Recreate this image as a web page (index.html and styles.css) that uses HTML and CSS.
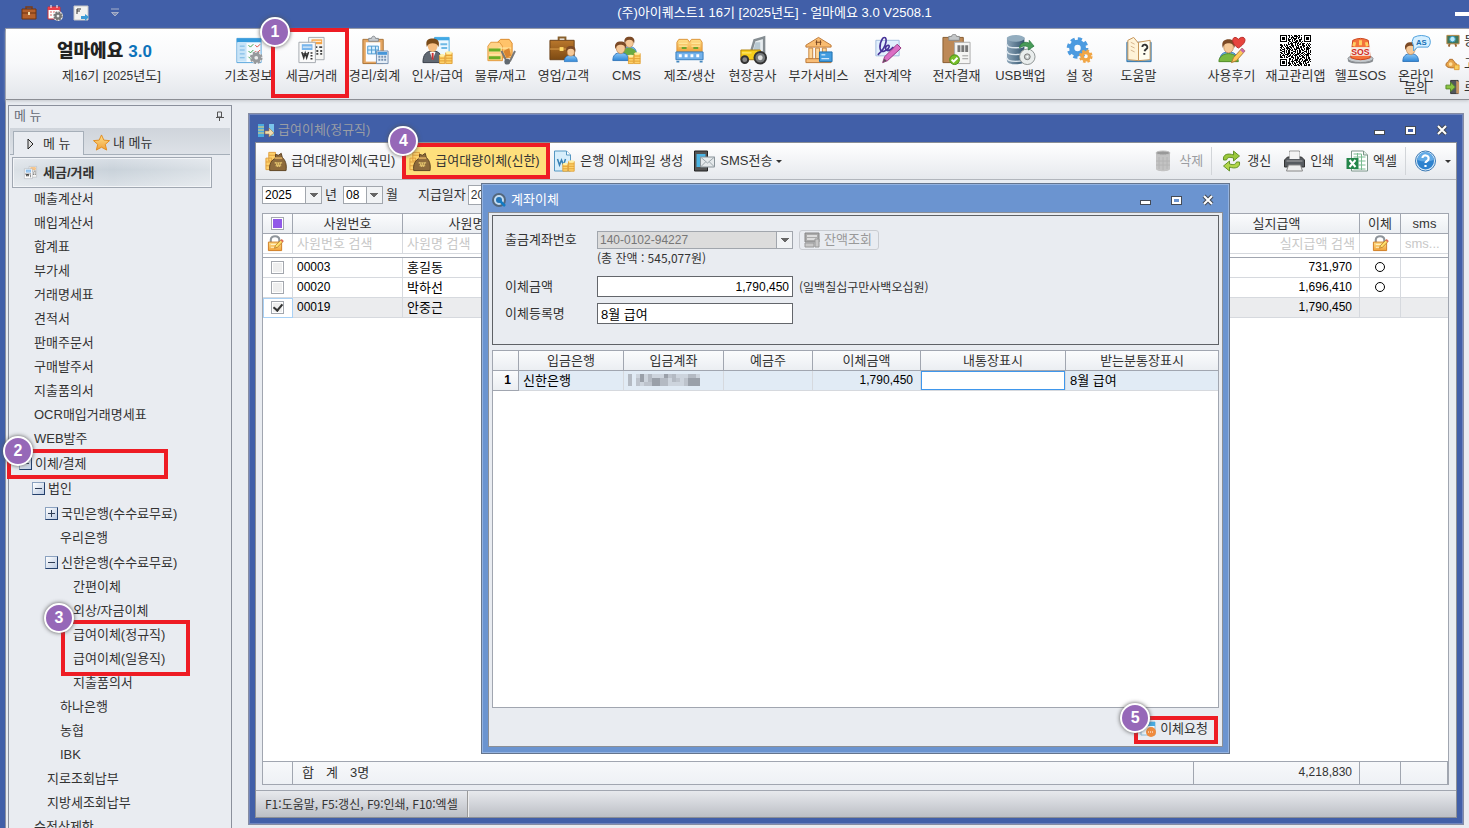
FILE: index.html
```html
<!DOCTYPE html>
<html lang="ko">
<head>
    <meta charset="UTF-8">
    <meta name="viewport" content="width=device-width, initial-scale=1.0">
    <title>(주)아이퀘스트1 16기 [2025년도] - 얼마에요 3.0 V2508.1</title>
    <link rel="stylesheet" href="styles.css">
</head>
<body>
    <!-- shared icon shapes -->
    <svg class="defs" aria-hidden="true">
        <defs>
            <linearGradient id="gBlue" x1="0" y1="0" x2="0" y2="1"><stop offset="0" stop-color="#8cc9f8"/><stop offset="1" stop-color="#2f86d6"/></linearGradient>
            <linearGradient id="gGold" x1="0" y1="0" x2="0" y2="1"><stop offset="0" stop-color="#ffe08a"/><stop offset="1" stop-color="#f0a13a"/></linearGradient>
            <linearGradient id="gBrown" x1="0" y1="0" x2="0" y2="1"><stop offset="0" stop-color="#b9772c"/><stop offset="1" stop-color="#7d4a12"/></linearGradient>
            <linearGradient id="gSteel" x1="0" y1="0" x2="1" y2="0"><stop offset="0" stop-color="#8ba4b8"/><stop offset="1" stop-color="#34556e"/></linearGradient>
        </defs>
        <symbol id="person" viewBox="0 0 20 24">
            <path d="M1 23c0-6 3-9 9-9s9 3 9 9z" fill="url(#gBlue)" stroke="#2d72b8"/>
            <ellipse cx="10" cy="9" rx="5" ry="6" fill="#f6c998" stroke="#b8793e" stroke-width=".7"/>
            <path d="M4 10C2 3 6 1 10 1s8 2 6 9c-1-4-3-5-6-5s-5 1-6 5z" fill="#7c4a26"/>
        </symbol>
        <symbol id="coins" viewBox="0 0 16 16">
            <path d="M1 6h6v9H1zM8 3h7v12H8z" fill="#fdd16b" stroke="#e09c2c"/>
            <path d="M1 9h6M1 12h6M8 6h7M8 9h7M8 12h7" stroke="#e09c2c"/>
            <ellipse cx="4" cy="6" rx="3" ry="1.5" fill="#fff0a8"/><ellipse cx="11.500" cy="3" rx="3.500" ry="1.500" fill="#fff0a8"/>
        </symbol>
        <symbol id="gear" viewBox="0 0 20 20">
            <circle cx="10" cy="10" r="7.800" fill="none" stroke="currentColor" stroke-width="3" stroke-dasharray="3.500 2.627"/>
            <circle cx="10" cy="10" r="5" fill="none" stroke="currentColor" stroke-width="4.500"/>
        </symbol>
        <symbol id="bag" viewBox="0 0 24 22">
            <path d="M2 8h6v12H2zM5 2h7v9H5z" fill="#fdd16b" stroke="#e0a040"/>
            <path d="M2 12h6M2 16h6M5 5h7" stroke="#e0a040"/>
            <path d="M12 4l3 1 3-2 1 4c3 3 5 7 4 14H6c-1-7 2-11 6-13z" fill="#8d6a3c" stroke="#5d4220"/>
            <path d="M11 8h8" stroke="#d2a55b" stroke-width="2"/>
            <path d="M11 13h8M12 16h6M12 12l2 5 1-4 1 4 2-5" stroke="#e6c66f" fill="none"/>
        </symbol>
        <symbol id="tax" viewBox="0 0 32 32">
            <path d="M13 3h16v23H13z" fill="#f6f6f4" stroke="#a4a9af"/>
            <path d="M16 5h11v5H16z" fill="#f5a548"/><path d="M17 7h9" stroke="#fff"/>
            <path d="M16 13h2m2 0h2m2 0h3M21 17h2m2 0h2M21 20h2m2 0h2" stroke="#444" stroke-width="2"/>
            <path d="M3 8h17v21H3z" fill="#fafafa" stroke="#a4a9af"/>
            <path d="M6 10h11v6H6z" fill="#79b5ec"/><path d="M7 13h9" stroke="#fff"/>
            <path d="M6 20h7M6 18l2 6 1.500-5 1.500 5 2-6M15 19h2m-2 3h2m-2 3h2" stroke="#333" stroke-width="1.500" fill="none"/>
        </symbol>
        <symbol id="lock" viewBox="0 0 18 18">
            <path d="M4 8V5c0-5 9-5 9 0v3" fill="none" stroke="#8f959b" stroke-width="2.200"/>
            <path d="M1.500 7.500h14v9h-14z" fill="url(#gGold)" stroke="#cf7c21"/>
            <path d="M4 10h6M4 13h4" stroke="#fff5cf"/>
            <path d="M8 14l1-3 6-6 2 2-6 6z" fill="#ffe06b" stroke="#b57422" stroke-width=".8"/><path d="M15 5l2 2" stroke="#df6b58" stroke-width="2"/>
        </symbol>
    </svg>

    <header class="titlebar">
        <div class="quick">
            <button type="button" aria-label="업무"><svg viewBox="0 0 16 16"><path d="M5 4V2h6v2" fill="none" stroke="#7c3d16" stroke-width="1.500"/><path d="M1 4h14v10H1z" fill="#b4602c" stroke="#71340f"/><path d="M1 8h14" stroke="#6c3210"/><path d="M7 7h2v3H7z" fill="#f2dba7"/></svg></button>
            <button type="button" aria-label="일정"><svg viewBox="0 0 16 16"><path d="M1 2h12v12H1z" fill="#fff" stroke="#c33"/><path d="M1 2h12v3H1z" fill="#e8404c"/><path d="M4 0v3M10 0v3" stroke="#fff"/><path d="M3 7h2m1 0h2M3 10h2" stroke="#d66"/><circle cx="11" cy="11" r="5" fill="#eee"/><svg x="6" y="6" width="10" height="10" color="#777"><use href="#gear"/></svg></svg></button>
            <button type="button" aria-label="기능키"><svg viewBox="0 0 16 16"><path d="M1 1h14v14H1z" fill="#f3f3f1" stroke="#c6c6c6"/><path d="M4 9V4h4M4 6h3" stroke="#333" fill="none"/><path d="M8 11h4V9l4 3-4 4v-2H8z" fill="#3d9bd6"/></svg></button>
            <button type="button" class="quick-more" aria-label="더 보기"><svg viewBox="0 0 16 16"><path d="M4 4h8M4.500 7.500h7L8 11z" stroke="#a6b0c9" fill="#7f8db5"/></svg></button>
        </div>
        <h1>(주)아이퀘스트1 16기 [2025년도] - 얼마에요 3.0 V2508.1</h1>
        <button type="button" class="app-min" aria-label="최소화"></button>
    </header>

    <div class="shell">
        <div class="ribbon">
            <div class="brand">
                <div class="logo">얼마에요 <span>3.0</span></div>
                <div class="period">제<span class="num">16</span>기 [<span class="num">2025</span>년도]</div>
            </div>
            <nav class="ribbon-menu" aria-label="주 메뉴">
                <button type="button"><svg viewBox="0 0 32 32"><path d="M4 4h25v25H4z" fill="#f8fbfe" stroke="#5aa5dc"/><path d="M4 4h25v4H4z" fill="#359bdc"/><path d="M5 8h9v20H5z" fill="#c7e4f8"/><path d="M7 12h5M7 16h5M7 20h5M7 24h5" stroke="#73b5e4"/><path d="M16 11l2 2 3-3M16 17l2 2 3-3M16 23l2 2 3-3" fill="none" stroke="#38a04c"/><path d="M23 11l2 2 3-3M23 17l2 2 3-3" fill="none" stroke="#df4b43"/><circle cx="24" cy="24" r="6" fill="#eee"/><svg x="17" y="17" width="14" height="14" color="#96999c"><use href="#gear"/></svg></svg>기초정보</button>
                <button type="button" class="marked mark-tax"><svg><use href="#tax"/></svg>세금/거래<b class="badge">1</b></button>
                <button type="button"><svg viewBox="0 0 32 32"><path d="M4 5h21v25H4z" fill="#e5a662" stroke="#a97336"/><path d="M7 8h15v20H7z" fill="#fafcff"/><path d="M10 6V4h3c0-3 4-3 4 0h3v3H10z" fill="#c8ccd0" stroke="#83888e"/><path d="M9 12h11v8H9zM9 16h11M13 12v8M17 12v8" fill="#d8efff" stroke="#4d9bd2"/><path d="M18 17h12v13H18z" fill="#e5eef7" stroke="#7892b2"/><path d="M19 18h10v3H19z" fill="#4696d9"/><path d="M20 23h2m1 0h2m1 0h2M20 26h2m1 0h2m1 0h2" stroke="#7792b2" stroke-width="2"/></svg>경리/회계</button>
                <button type="button"><svg viewBox="0 0 32 32"><path d="M13 3h15v19H13z" fill="#edf8ff" stroke="#4eaee4"/><path d="M13 3h15v3H13z" fill="#42a9e5"/><path d="M19 10h7M20 14h6" stroke="#6fb9e5" stroke-width="2"/><path d="M1 29c0-8 3-12 10-12s10 4 10 12z" fill="#606872" stroke="#343b45"/><path d="M8 18l3 8 3-8z" fill="#fff"/><path d="M11 19v7" stroke="#c33" stroke-width="2"/><ellipse cx="11" cy="12" rx="5" ry="6" fill="#f5bd80"/><path d="M5 13C3 5 7 4 11 4s8 2 6 9c-1-3-3-4-6-4s-5 1-6 4z" fill="#7a4b19"/><svg x="17" y="16" width="15" height="15"><use href="#coins"/></svg></svg>인사/급여</button>
                <button type="button"><svg viewBox="0 0 32 32"><path d="M13 8l3-3h9l3 4v15H13z" fill="#ffc36a" stroke="#db8a2c"/><path d="M3 12l3-4h9l3 4v15H3z" fill="#ffd287" stroke="#e39a3e"/><path d="M4 17h12M4 21h12M14 14h13" stroke="#fff0b0"/><path d="M4 16h12M4 24h12" stroke="#69ad25" stroke-width="3"/><path d="M17 17l5 10h4l5-10" fill="none" stroke="#777" stroke-width="2"/><path d="M19 17l6-3 2 8-5 2z" fill="#d88531"/><circle cx="23" cy="28" r="3" fill="#626970"/></svg>물류/재고</button>
                <button type="button"><svg viewBox="0 0 32 32"><path d="M11 6V3h7v3" fill="none" stroke="#88602d" stroke-width="2"/><path d="M2 6h25v20H2z" fill="url(#gBrown)" stroke="#6a4016"/><path d="M2 15h25" stroke="#dfa14d"/><path d="M12 13h4v4h-4z" fill="#ffdb68"/><svg x="16" y="11" width="15" height="18"><use href="#person"/></svg></svg>영업/고객</button>
                <button type="button"><svg viewBox="0 0 32 32"><svg x="11" y="1" width="16" height="20"><use href="#person"/></svg><path d="M11 21c0-10 16-10 16 1z" fill="#69aa42"/><svg x="1" y="5" width="18" height="24"><use href="#person"/></svg><svg x="17" y="17" width="14" height="14"><use href="#coins"/></svg></svg>CMS</button>
                <button type="button"><svg viewBox="0 0 32 32"><path d="M3 8l2-3h9l2 3 2-3h9l2 3v10H3z" fill="url(#gGold)" stroke="#dc9439"/><path d="M5 9h9M18 9h9M5 12h9M18 12h9" stroke="#fff2a8"/><path d="M8 14h5M20 14h5" stroke="#6ca42d" stroke-width="2"/><path d="M2 18h28v8H2z" fill="#73b1ea" stroke="#367fc0"/><path d="M5 22h3m3 0h3m3 0h3m3 0h3" stroke="#fff" stroke-width="3"/><path d="M4 27v2m24-2v2" stroke="#4386bd" stroke-width="3"/></svg>제조/생산</button>
                <button type="button"><svg viewBox="0 0 32 32"><path d="M15 16l3-10 10-3v16" fill="#e8edf0" stroke="#858d92" stroke-width="2.500"/><path d="M19 8h5v8h-7z" fill="#b9c9d2"/><path d="M4 16h20v10H4z" fill="#f7ce19" stroke="#b28209"/><path d="M5 19h10" stroke="#fff18a"/><circle cx="24" cy="24" r="6" fill="#777b7d" stroke="#333" stroke-width="2"/><circle cx="24" cy="24" r="2.500" fill="#e1e1df"/><circle cx="8" cy="26" r="3.500" fill="#888" stroke="#333" stroke-width="2"/></svg>현장공사</button>
                <button type="button" class="wide"><svg viewBox="0 0 32 32"><path d="M3 11L16 3l13 8v2H3z" fill="#f9bc70" stroke="#bd7937"/><path d="M6 14h4v11H6zM13 14h4v11h-4zM20 14h4v11h-4z" fill="#ffd798" stroke="#c78440"/><path d="M3 25h26v4H3z" fill="#f8bd77" stroke="#bd7937"/><path d="M14 6v5m4-5v5m-5-3h6" stroke="#774522"/><path d="M17 18h13v10H17z" fill="#449de0" stroke="#1e6fad"/><path d="M19 21h4M19 25h8" stroke="#fff"/></svg>부가서비스</button>
                <button type="button" class="wide"><svg viewBox="0 0 32 32"><path d="M4 6h24v16H4z" fill="#e1effd" stroke="#a2bcdd"/><path d="M6 21C17 11 16 0 11 4 7 10 7 20 13 17c7-3 5-8 2-5s1 8 7 1c-2 8 3 4 5-1" fill="none" stroke="#463298" stroke-width="1.700"/><path d="M11 29l2-6L26 10l4 4-14 13z" fill="#db6fc5" stroke="#953880"/><path d="M11 29l4-2-2-2z" fill="#555"/></svg>전자계약</button>
                <button type="button" class="wide"><svg viewBox="0 0 32 32"><path d="M2 3h21v26H2z" fill="#bd8957" stroke="#875c31"/><path d="M8 5V2h3c0-3 5-3 5 0h3v4H8z" fill="#c3c6c8" stroke="#888"/><path d="M14 8h16v22H14z" fill="#f5f5f4" stroke="#aaa"/><path d="M17 11h3v7h-3zM21 11h3v7h-3zM25 11h3v7h-3z" fill="#777"/><path d="M22 22h6M22 25h6" stroke="#999"/><circle cx="14" cy="26" r="5" fill="#78bf2a" stroke="#459017"/><path d="M11 26l2 2 4-4" fill="none" stroke="#fff" stroke-width="2"/></svg>전자결재</button>
                <button type="button" class="slim"><svg viewBox="0 0 32 32"><path d="M2 3v24c0 5 18 5 18 0V3z" fill="url(#gSteel)"/><ellipse cx="11" cy="4" rx="9" ry="3.500" fill="#93adbf"/><path d="M2 10c0 5 18 5 18 0M2 17c0 5 18 5 18 0M2 24c0 5 18 5 18 0" fill="none" stroke="#dce6ed" stroke-width="1.500"/><circle cx="23" cy="23" r="8" fill="#e9eded" stroke="#8c9393"/><circle cx="23" cy="23" r="3" fill="#c7cdcd" stroke="#777"/><circle cx="23" cy="23" r="1" fill="#fff"/><path d="M15 14c0-6 7-7 10-5V6l5 6-6 4v-3c-4-2-6-1-9 1z" fill="#489b58" stroke="#26743c" stroke-width=".7"/></svg>USB백업</button>
                <button type="button" class="slim"><svg viewBox="0 0 32 32"><svg x="2" y="2" width="24" height="24" color="#4c9be0"><use href="#gear"/></svg><svg x="15" y="15" width="15" height="15" color="#f1a646"><use href="#gear"/></svg></svg>설 정</button>
                <button type="button" class="slim"><svg viewBox="0 0 32 32"><path d="M4 8h25v20H4z" fill="#62abe3" stroke="#3475a9"/><path d="M5 6l6-3 5 6v18l-11-1z" fill="#fff3d7" stroke="#c59458"/><path d="M16 8l12-2v20l-12 1z" fill="#fffdf0" stroke="#c59458"/><path d="M8 8l4 2M8 12l4 2M8 16l4 2" stroke="#d5b48c"/><path d="M20 13c0-4 6-3 5 1l-3 3m0 2v2" fill="none" stroke="#333" stroke-width="2"/></svg>도움말</button>
                <button type="button" class="extra"><svg viewBox="0 0 32 32"><svg x="3" y="4" width="20" height="24"><use href="#person"/></svg><path d="M3 28c0-11 20-11 20 0z" fill="#79b83f" stroke="#4f8a25"/><path d="M23 14c-10-6-5-15 0-9 6-6 12 2 0 9z" fill="#e6443d" stroke="#b92c29"/><path d="M16 29l2-5 9-10 3 3-9 10z" fill="#ffc95b" stroke="#b17a35"/><path d="M26 15l3 3" stroke="#c76aab" stroke-width="3"/></svg>사용후기</button>
                <button type="button"><svg viewBox="0 0 31 31" shape-rendering="crispEdges"><path d="M0 0h31v31H0z" fill="#fff"/><path d="M8 .5h15M9 6.500h15M0 12.500h31M1 18.500h30M9 24.500h22M8 30.500h23" stroke="#000" stroke-dasharray="2 1 1 2 3 1"/><path d="M9 2.500h14M8 8.500h22M0 14.500h30M0 20.500h31M9 26.500h22" stroke="#000" stroke-dasharray="1 1 3 2 1 1 2 1"/><path d="M8 4.500h14M0 10.500h31M2 16.500h29M0 22.500h31M8 28.500h22" stroke="#000" stroke-dasharray="3 1 1 1 2 3"/><path d="M9 1.500h13M8 7.500h15M1 13.500h30M0 19.500h31M9 25.500h21M8 3.500h15" stroke="#000" stroke-dasharray="1 2 1 1 4 1"/><path d="M8 5.500h14M0 9.500h31M0 15.500h31M0 21.500h30M9 29.500h21M1 11.500h30M0 17.500h31M9 23.500h22M8 27.500h22" stroke="#000" stroke-dasharray="2 2 1 1 1 1 2 1"/><path d="M.5.500h6v6h-6zM24.500.500h6v6h-6zM.5 24.500h6v6h-6z" fill="#fff" stroke="#000"/><path d="M2 2h3v3H2zM26 2h3v3h-3zM2 26h3v3H2z"/></svg>재고관리앱</button>
                <button type="button"><svg viewBox="0 0 32 32"><path d="M3 25v2c0 4 26 4 26 0v-2z" fill="#85898e"/><ellipse cx="16" cy="25" rx="13" ry="4" fill="#c3c8cc" stroke="#8b8f94"/><path d="M6 24L8 6q8-4 16 0l2 18q-10 4-20 0z" fill="#f4733c" stroke="#ca421b"/><path d="M10 8l-1 4m7-6v5m6-3l1 4" stroke="#ffd064" stroke-width="3"/><path d="M6 13h20v9H6z" fill="#f6ece4"/><text x="16" y="21" class="sos">SOS</text></svg>헬프SOS</button>
                <button type="button" class="narrow"><svg viewBox="0 0 32 32"><svg x="1" y="7" width="18" height="22"><use href="#person"/></svg><path d="M13 3q8-4 16 0 3 6-1 10H17l-4 4v-5q-3-5 0-9z" fill="#d6efff" stroke="#4b9fdc"/><text x="21" y="11" class="as">AS</text></svg>온라인 문의</button>
                <div class="ribbon-side">
                    <a href="#"><svg viewBox="0 0 16 16"><path d="M2 2h13v9H2z" fill="#40765b" stroke="#ba8843"/><circle cx="8" cy="6" r="3" fill="#b9eafa" stroke="#2b91bc"/><path d="M5 11l-1 3m7-3l1 3" stroke="#9b6833" stroke-width="2"/></svg>동영상</a>
                    <a href="#"><svg viewBox="0 0 16 16"><path d="M1 9c0-3 3-3 4-6h3c1 3 5 4 5 7s-12 3-12-1z" fill="#e7a44a" stroke="#ad6b2b"/><circle cx="6" cy="8" r="2" fill="#ffdf9b"/><path d="M10 9h5v5h-5z" fill="#f9cd5d" stroke="#dd9b35"/></svg>고객</a>
                    <a href="#"><svg viewBox="0 0 16 16"><path d="M6 1h8v14H6z" fill="#51575c" stroke="#343639"/><path d="M12 1l3 2v12h-3z" fill="#c89864"/><path d="M1 6h5V3l5 5-5 5v-3H1z" fill="#8bc442" stroke="#56892a"/></svg>로그</a>
                </div>
            </nav>
        </div>

        <div class="workspace">
            <aside class="sidebar">
                <div class="side-head">메 뉴<svg viewBox="0 0 10 10"><path d="M2.500 1v5h4V1zM1 6.500h8M4.500 6v4" fill="none" stroke="#555"/></svg></div>
                <div class="side-tabs">
                    <button type="button" class="active"><svg class="play" viewBox="0 0 8 12"><path d="M1 1v10l5-5z" fill="#ddd" stroke="#222"/></svg>메 뉴</button>
                    <button type="button"><svg class="star" viewBox="0 0 18 18"><path d="M9 1l2.500 5.500 6 .5-4.500 4 1.500 6L9 14l-5.500 3L5 11 .5 7l6-.5z" fill="url(#gGold)" stroke="#e28b1c"/></svg>내 메뉴</button>
                </div>
                <h2><svg><use href="#tax"/></svg>세금/거래</h2>
                <ul class="tree">
                    <li><a href="#">매출계산서</a></li>
                    <li><a href="#">매입계산서</a></li>
                    <li><a href="#">합계표</a></li>
                    <li><a href="#">부가세</a></li>
                    <li><a href="#">거래명세표</a></li>
                    <li><a href="#">견적서</a></li>
                    <li><a href="#">판매주문서</a></li>
                    <li><a href="#">구매발주서</a></li>
                    <li><a href="#">지출품의서</a></li>
                    <li><a href="#">OCR매입거래명세표</a></li>
                    <li><a href="#">WEB발주</a></li>
                    <li>
                        <div class="node marked mark-transfer"><button type="button" class="toggle" aria-label="이체/결제 접기"></button><a href="#">이체/결제</a><b class="badge">2</b></div>
                        <ul>
                            <li>
                                <div class="node"><button type="button" class="toggle" aria-label="법인 접기"></button><a href="#">법인</a></div>
                                <ul>
                                    <li><div class="node"><button type="button" class="toggle closed" aria-label="국민은행 펼치기"></button><a href="#">국민은행(수수료무료)</a></div></li>
                                    <li><a href="#">우리은행</a></li>
                                    <li>
                                        <div class="node"><button type="button" class="toggle" aria-label="신한은행 접기"></button><a href="#">신한은행(수수료무료)</a></div>
                                        <ul>
                                            <li><a href="#">간편이체</a></li>
                                            <li><a href="#">외상/자금이체</a></li>
                                            <li class="marked mark-salary"><a href="#">급여이체(정규직)</a><b class="badge">3</b></li>
                                            <li><a href="#">급여이체(일용직)</a></li>
                                            <li><a href="#">지출품의서</a></li>
                                        </ul>
                                    </li>
                                    <li><a href="#">하나은행</a></li>
                                    <li><a href="#">농협</a></li>
                                    <li><a href="#">IBK</a></li>
                                </ul>
                            </li>
                            <li><a href="#">지로조회납부</a></li>
                            <li><a href="#">지방세조회납부</a></li>
                        </ul>
                    </li>
                    <li><a href="#">수정삭제함</a></li>
                </ul>
            </aside>

            <main class="window">
                <div class="window-title">
                    <svg viewBox="0 0 16 16"><path d="M0 2h6v13H0z" fill="#49a8df"/><path d="M0 5h6M0 8h6M0 11h6" stroke="#f5d36a"/><path d="M11 2h5v12h-5z" fill="#79c3eb"/><path d="M7 9h4V6l5 5-5 4v-3H7z" fill="#f0ddb0" stroke="#a77a40" stroke-width=".6"/></svg>
                    <h2>급여이체(정규직)</h2>
                    <div class="controls"><button type="button" class="min" aria-label="최소화"></button><button type="button" class="max" aria-label="최대화"></button><button type="button" aria-label="닫기"><svg viewBox="0 0 12 12"><path d="M2 2l8 8M10 2l-8 8" stroke="#444a55" stroke-width="4"/><path d="M2 2l8 8M10 2l-8 8" stroke="#fff" stroke-width="2"/></svg></button></div>
                </div>
                <div class="client">
                    <div class="toolbar">
                        <button type="button"><svg><use href="#bag"/></svg>급여대량이체(국민)</button>
                        <button type="button" class="hot marked mark-bulk"><svg><use href="#bag"/></svg>급여대량이체(신한)<b class="badge">4</b></button>
                        <button type="button"><svg viewBox="0 0 22 22"><path d="M1 1h12l4 4v16H1z" fill="#d7eefb" stroke="#5597c2"/><path d="M13 1v4h4" fill="#fff" stroke="#5597c2"/><path d="M4 9l2 6 2-5 2 5 2-6" fill="none" stroke="#3680b5" stroke-width="1.500"/><svg x="8" y="9" width="14" height="13"><use href="#coins"/></svg></svg>은행 이체파일 생성</button>
                        <button type="button" class="sms"><svg viewBox="0 0 22 22"><path d="M1 1h13v20H1z" fill="#555" stroke="#222"/><path d="M3 4h9v13H3z" fill="#4cb5e4"/><path d="M7 7h14v10H7z" fill="#e5e9eb" stroke="#899399"/><path d="M7 7l7 6 7-6M7 17l5-5m9 5l-5-5" fill="none" stroke="#9ba5aa"/></svg>SMS전송<i class="caret"></i></button>
                        <div class="tools">
                            <button type="button" disabled><svg class="bin" viewBox="0 0 16 22"><path d="M1 3v16c0 3 14 3 14 0V3z" fill="#c3c3c3"/><ellipse cx="8" cy="3" rx="7" ry="2" fill="#999" stroke="#c0c0c0"/><path d="M4 7v12M8 7v13M12 7v12M1 11h14M1 15h14" stroke="#b4b4b4"/></svg>삭제</button>
                            <button type="button" class="sep"><svg viewBox="0 0 22 22"><path d="M3 10C2 4 8 3 13 5V1l6 5-6 5V8C9 7 7 7 6 10z" fill="#9bc83b" stroke="#659329"/><path d="M19 12c1 6-5 7-10 5v4l-6-5 6-5v3c4 1 6 1 7-2z" fill="#b2d64a" stroke="#659329"/></svg>갱신</button>
                            <button type="button"><svg viewBox="0 0 22 22"><path d="M6 1h10v10H6z" fill="#fafafa" stroke="#999"/><path d="M1 10l3-3h14l3 3v7H1z" fill="#575b60" stroke="#333"/><path d="M6 2h10v7H6z" fill="#f4f4f4"/><path d="M3 11h16" stroke="#aaa"/><path d="M5 15h12l2 6H3z" fill="#eee" stroke="#888"/></svg>인쇄</button>
                            <button type="button"><svg viewBox="0 0 22 22"><path d="M5 1h12l4 4v16H5z" fill="#fff" stroke="#7d958a"/><path d="M7 4h8M7 7h12M12 11h7M12 15h7M7 19h12M15 4v16M11 3v6" stroke="#79bb91"/><path d="M17 1v4h4" fill="#e1eee6" stroke="#7d958a"/><path d="M0 8h12v11H0z" fill="#24864a"/><path d="M3 10l6 7m0-7l-6 7" stroke="#fff" stroke-width="2"/></svg>엑셀</button>
                            <button type="button" class="sep help" aria-label="도움말"><svg viewBox="0 0 22 22"><circle cx="11" cy="11" r="10" fill="#dcecf9" stroke="#3b79b4"/><circle cx="11" cy="11" r="8.500" fill="#2e82ce"/><path d="M3 10a8 8 0 0 1 16 0q-8 3-16 0z" fill="#62aae6"/><path d="M8 8c0-4 7-3 6 1 0 2-3 2-3 4m0 2v2" fill="none" stroke="#fff" stroke-width="2.200"/></svg><i class="caret"></i></button>
                        </div>
                    </div>

                    <form class="filter">
                        <span class="combo year"><select id="year"><option>2025</option></select></span><label for="year">년</label>
                        <span class="combo month"><select id="month"><option>08</option></select></span><label for="month">월</label>
                        <label for="payday" class="payday">지급일자</label><input id="payday" type="text" value="2025-08-25">
                    </form>

                    <div class="grid">
                        <table>
                            <colgroup><col class="c-check"><col class="c-no"><col class="c-name"><col><col class="c-pay"><col class="c-done"><col class="c-sms"></colgroup>
                            <thead>
                                <tr><th><input type="checkbox" class="some" aria-label="전체 선택"></th><th>사원번호</th><th>사원명</th><th></th><th>실지급액</th><th>이체</th><th>sms</th></tr>
                                <tr class="search"><td><svg><use href="#lock"/></svg></td><td>사원번호 검색</td><td>사원명 검색</td><td></td><td class="right">실지급액 검색</td><td class="mid"><svg><use href="#lock"/></svg></td><td>sms...</td></tr>
                                <tr class="gap"><td colspan="7"></td></tr>
                            </thead>
                            <tbody>
                                <tr><td><input type="checkbox" aria-label="홍길동 선택"></td><td class="num">00003</td><td>홍길동</td><td></td><td class="num right">731,970</td><td class="mid"><i class="ring"></i></td><td></td></tr>
                                <tr><td><input type="checkbox" aria-label="박하선 선택"></td><td class="num">00020</td><td>박하선</td><td></td><td class="num right">1,696,410</td><td class="mid"><i class="ring"></i></td><td></td></tr>
                                <tr class="selected"><td><input type="checkbox" checked aria-label="안중근 선택"></td><td class="num">00019</td><td>안중근</td><td></td><td class="num right">1,790,450</td><td></td><td></td></tr>
                            </tbody>
                        </table>
                        <table class="totals">
                            <colgroup><col class="c-check"><col><col class="c-pay"><col class="c-done"><col class="c-sms"></colgroup>
                            <tbody><tr><td></td><td><span>합</span><span>계</span><span>3명</span></td><td class="num right">4,218,830</td><td></td><td></td></tr></tbody>
                        </table>
                    </div>
                    <footer class="status"><span>F1:도움말, F5:갱신, F9:인쇄, F10:엑셀</span></footer>
                </div>

                <section class="window dialog" role="dialog" aria-labelledby="dlgTitle">
                    <div class="window-title">
                        <svg viewBox="0 0 16 16"><circle cx="8" cy="8" r="6" fill="#c3dcf2" stroke="#54677c" stroke-width="2"/><circle cx="8" cy="8" r="3" fill="#2374b8"/><path d="M9 9l5 5" stroke="#127bc3" stroke-width="2.500"/></svg>
                        <h2 id="dlgTitle">계좌이체</h2>
                        <div class="controls"><button type="button" class="min" aria-label="최소화"></button><button type="button" class="max" aria-label="최대화"></button><button type="button" aria-label="닫기"><svg viewBox="0 0 12 12"><path d="M2 2l8 8M10 2l-8 8" stroke="#444a55" stroke-width="4"/><path d="M2 2l8 8M10 2l-8 8" stroke="#fff" stroke-width="2"/></svg></button></div>
                    </div>
                    <div class="client">
                        <form class="transfer">
                            <label for="account">출금계좌번호</label>
                            <span class="combo off"><select id="account" disabled><option>140-0102-94227</option></select></span>
                            <button type="button" class="balance" disabled><svg viewBox="0 0 16 16"><path d="M1 1h14v9H1z" fill="#aaa" stroke="#888"/><path d="M3 4h10M3 7h10" stroke="#ddd" stroke-width="2"/><path d="M1 11h9v4H1zM11 7h4v8h-4z" fill="#c7c7c7" stroke="#999"/></svg>잔액조회</button>
                            <small class="left">(총 잔액 : 545,077원)</small>
                            <label for="amount">이체금액</label>
                            <input id="amount" class="num right" type="text" value="1,790,450">
                            <small>(일백칠십구만사백오십원)</small>
                            <label for="memo">이체등록명</label>
                            <input id="memo" type="text" value="8월 급여">
                        </form>
                        <div class="grid">
                            <table>
                                <colgroup><col class="d-no"><col class="d-bank"><col class="d-acct"><col class="d-owner"><col class="d-amt"><col class="d-mine"><col></colgroup>
                                <thead><tr><th></th><th>입금은행</th><th>입금계좌</th><th>예금주</th><th>이체금액</th><th>내통장표시</th><th>받는분통장표시</th></tr></thead>
                                <tbody><tr><th scope="row" class="num">1</th><td>신한은행</td><td><svg class="masked" viewBox="0 0 72 12" aria-label="가려진 계좌번호"><path d="M8 0h64v12H8z" fill="#cdd4dd"/><path d="M0 0h4v12H0zM20 0h4v12h-4zM32 4h8v8h-8zM44 0h4v8h-4zM60 0h8v4h-8z" fill="#b4bac3"/><path d="M8 4h4v8H8zM16 8h8v4h-8zM40 0h4v4h-4zM48 4h4v4h-4zM56 4h4v8h-4z" fill="#bdc3cc"/><path d="M12 0h4v8h-4zM24 4h8v8h-8zM36 0h4v4h-4zM60 4h8v8h-8zM68 4h4v8h-4z" fill="#9aa0a9"/></svg></td><td></td><td class="num right">1,790,450</td><td class="edit"><input type="text" aria-label="내통장표시"></td><td>8월 급여</td></tr></tbody>
                            </table>
                        </div>
                        <div class="actions">
                            <button type="button" class="marked mark-request"><svg viewBox="0 0 16 16"><path d="M1 1h14v13H1z" fill="#eff9ff" stroke="#8bbbd8"/><path d="M1 1h14v4H1z" fill="#48ace2"/><circle cx="11" cy="11" r="5" fill="#ef8b3e"/><path d="M8 11h1m1 0h1m1 0h1" stroke="#fff"/></svg>이체요청<b class="badge">5</b></button>
                        </div>
                    </div>
                </section>
            </main>
        </div>
    </div>
</body>
</html>
```

FILE: styles.css
```css
*, *::before, *::after {
    box-sizing: border-box;
}
body {
    margin: 0;
    height: 100vh;
    overflow: hidden;
    display: flex;
    flex-direction: column;
    background: #415fa8;
    color: #333;
    font: 13px/18px "Liberation Sans", "Noto Sans CJK KR", sans-serif;
}
button, input, select {
    font: inherit;
    color: inherit;
    border-radius: 0;
    margin: 0;
}
button {
    border: 0;
    padding: 0;
    background: none;
    white-space: nowrap;
}
a {
    color: inherit;
    text-decoration: none;
}
h1, h2 {
    margin: 0;
    font-size: 13px;
    font-weight: normal;
}
svg {
    display: block;
    flex: none;
}
.defs {
    position: absolute;
    width: 0;
    height: 0;
}
.num {
    font-size: 12px;
}
.right {
    text-align: right;
}

/* title bar */
.titlebar {
    flex: none;
    height: 28px;
    display: grid;
    grid-template-columns: 1fr auto 1fr;
    align-items: center;
    color: #fff;
}
.titlebar h1 {
    padding: 0 0 3px 80px;
}
.quick {
    display: flex;
    gap: 10px;
    padding: 0 0 2px 21px;
}
.quick button > svg {
    width: 16px;
    height: 16px;
}
.quick-more {
    margin-left: 8px;
}
.app-min {
    justify-self: end;
    width: 14px;
    height: 4px;
    background: #fff;
}

/* ribbon */
.shell {
    flex: 1;
    min-height: 0;
    display: flex;
    flex-direction: column;
    margin-left: 5px;
    border: 1px solid #8d92a0;
    border-width: 1px 0 0 1px;
    background: #e9ecf1;
}
.ribbon {
    flex: none;
    display: flex;
    height: 71px;
    border-bottom: 1px solid #8b8e94;
    background: linear-gradient(#fff, #f7f8fa 50%, #e3e6eb);
    box-shadow: 0 1px 3px #c4c7cc;
}
.brand {
    flex: none;
    width: 211px;
    padding: 11px 0 0 51px;
}
.logo {
    font-size: 18px;
    font-weight: 900;
    line-height: 22px;
    color: #222;
}
.logo span {
    color: #0d73bb;
    font-size: 17px;
}
.period {
    margin-top: 4px;
    padding-left: 5px;
}
.ribbon-menu {
    display: flex;
}
.ribbon-menu button {
    flex: none;
    width: 63px;
    display: flex;
    flex-direction: column;
    align-items: center;
    gap: 4px;
    padding-top: 5px;
    line-height: 12px;
}
.ribbon-menu button.wide {
    width: 69px;
}
.ribbon-menu button.slim {
    width: 59px;
}
.ribbon-menu button.narrow {
    width: 46px;
    white-space: normal;
}
.ribbon-menu button.extra {
    margin-left: 32px;
}
.ribbon-menu button.extra ~ button:not(.narrow) {
    width: 65px;
}
.ribbon-menu button > svg {
    width: 31px;
    height: 32px;
}
.ribbon-side {
    display: flex;
    flex-direction: column;
    gap: 7px;
    padding: 4px 0 0 6px;
}
.ribbon-side a {
    display: flex;
    gap: 4px;
    line-height: 16px;
    white-space: nowrap;
}
.ribbon-side svg {
    width: 15px;
    height: 16px;
}
.sos, .as {
    font: bold 9px "Liberation Sans", sans-serif;
    text-anchor: middle;
    fill: #d2281c;
}
.as {
    font-size: 8px;
    fill: #1670b5;
}

/* numbered steps: red frame + round badge */
.marked {
    position: relative;
}
.marked::after {
    content: "";
    position: absolute;
    inset: 0;
    z-index: 2;
    border: 4px solid #ee1c24;
    pointer-events: none;
}
.badge {
    position: absolute;
    z-index: 3;
    left: 0;
    top: 0;
    width: 30px;
    height: 30px;
    border: 2px solid #fff;
    border-radius: 50%;
    background: #9668b8;
    box-shadow: 0 0 4px #555;
    color: #fff;
    font: bold 16px/26px "Liberation Sans", sans-serif;
    text-align: center;
}
.mark-tax::after {
    inset: -1px -6px 1px -9px;
}
.mark-tax .badge {
    left: -20px;
    top: -12px;
}
.mark-transfer::after {
    inset: -2px 62px -3px -3px;
}
.mark-transfer .badge {
    left: -7px;
    top: -15px;
}
.mark-bulk .badge {
    left: -14px;
    top: -17px;
}
.mark-request .badge {
    left: -14px;
    top: -13px;
}

/* side menu */
.workspace {
    flex: 1;
    min-height: 0;
    display: flex;
    gap: 16px;
    padding: 5px 5px 3px 2px;
}
.sidebar {
    flex: none;
    width: 224px;
    height: 100vh;
    border: 1px solid #8b909c;
    padding: 0 1px;
}
.side-head {
    display: flex;
    align-items: center;
    justify-content: space-between;
    height: 22px;
    padding: 0 5px 2px 4px;
    color: #666b77;
}
.side-head svg {
    width: 10px;
    height: 10px;
}
.side-tabs {
    display: flex;
    height: 27px;
    padding: 3px 0 0 3px;
    border-bottom: 1px solid #a6afb9;
    background: linear-gradient(#cfd4db, #dde1e7);
}
.side-tabs button {
    display: flex;
    align-items: center;
    gap: 3px;
    padding: 0 9px;
}
.side-tabs .active {
    width: 71px;
    height: 24px;
    gap: 8px;
    padding: 0 13px;
    border: 1px solid #a6afb9;
    border-bottom: 0;
    background: #e9ecf1;
}
.play {
    width: 8px;
    height: 12px;
}
.star {
    width: 17px;
    height: 17px;
}
.sidebar h2 {
    display: flex;
    align-items: center;
    gap: 5px;
    width: 200px;
    height: 31px;
    margin: 2px;
    padding-left: 10px;
    border: 1px solid #a1a8b2;
    box-shadow: inset 0 0 0 1px #f3f5f8;
    background: linear-gradient(90deg, #ffffff55, #ffffff00 50%, #ffffff55), linear-gradient(#d9dfe6, #c9d2da 40%, #dbe1e7);
    font-weight: bold;
}
.sidebar h2 svg {
    width: 15px;
    height: 15px;
}
.tree, .tree ul {
    margin: 0;
    padding: 0;
    list-style: none;
}
.tree {
    margin-top: -3px;
}
.tree ul {
    padding-left: 13px;
}
.tree li {
    line-height: 24px;
    padding-left: 24px;
}
.tree li:has(> .node) {
    padding-left: 0;
}
.mark-salary::after {
    inset: -3px 40px -29px 12px;
}
.mark-salary .badge {
    left: -5px;
    top: -20px;
}
.node {
    display: flex;
    align-items: center;
    gap: 3px;
    height: 25px;
    padding-left: 9px;
}
.toggle {
    width: 13px;
    height: 13px;
    border: 1px solid #8ba2c0;
    border-right-color: #233f6b;
    border-bottom-color: #233f6b;
    background: linear-gradient(#2e3d55, #2e3d55) center/7px 1px no-repeat, linear-gradient(135deg, #fff, #bccbe2);
}
.toggle.closed {
    background: linear-gradient(#2e3d55, #2e3d55) center/7px 1px no-repeat, linear-gradient(#2e3d55, #2e3d55) center/1px 7px no-repeat, linear-gradient(135deg, #fff, #bccbe2);
}

/* windows */
.window {
    position: relative;
    flex: 1;
    min-width: 0;
    display: flex;
    flex-direction: column;
    margin-top: 8px;
    padding: 0 6px 6px;
    border: 1px solid #858ca3;
    box-shadow: inset 0 0 0 1px #7085bd;
    background: #415fa8;
}
.window-title {
    flex: none;
    display: flex;
    align-items: center;
    gap: 4px;
    height: 28px;
    padding: 4px 0 0 3px;
    color: #999da5;
}
.window-title > svg {
    width: 16px;
    height: 16px;
}
.controls {
    display: flex;
    margin-left: auto;
}
.controls button {
    width: 31px;
    height: 20px;
    display: flex;
    align-items: center;
    justify-content: center;
}
.controls svg {
    width: 12px;
    height: 12px;
}
.min::before {
    content: "";
    width: 11px;
    height: 5px;
    margin-top: 5px;
    border: 1px solid #444a55;
    background: #fff;
}
.max::before {
    content: "";
    width: 9px;
    height: 7px;
    border: 2px solid #fff;
    outline: 1px solid #444a55;
}
.client {
    flex: 1;
    min-height: 0;
    display: flex;
    flex-direction: column;
    border: 1px solid #8b8f96;
    background: #e9ecf1;
}

/* toolbar */
.toolbar {
    flex: none;
    display: flex;
    align-items: center;
    height: 37px;
    padding-left: 8px;
    border-bottom: 1px solid #b2b6bc;
    background: linear-gradient(#fff, #e6e9ed);
}
.toolbar button {
    height: 36px;
    display: flex;
    align-items: center;
    gap: 4px;
}
.toolbar button > svg {
    width: 23px;
    height: 22px;
}
.toolbar .hot {
    width: 148px;
    margin: 0 3px 0 7px;
    padding: 0 6px;
    background: #fedf7c;
}
.toolbar .sms {
    margin-left: 10px;
}
.caret {
    border: 3px solid transparent;
    border-top-color: #333;
    border-bottom: 0;
}
.tools {
    display: flex;
    align-items: center;
    gap: 12px;
    margin-left: auto;
    padding-right: 5px;
}
.tools button:disabled {
    color: #9b9da1;
}
.tools button > .bin {
    width: 16px;
    margin-right: 4px;
}
.tools .sep {
    height: 28px;
    padding-left: 8px;
    border-left: 1px solid #d2d5d9;
    margin-left: -4px;
}
.tools .help {
    gap: 8px;
}

/* filter */
.filter {
    flex: none;
    display: flex;
    align-items: center;
    height: 33px;
    padding: 0 0 3px 6px;
    white-space: nowrap;
}
.filter label {
    margin: 0 6px 0 3px;
}
.filter .payday {
    margin: 0 2px 0 14px;
}
.combo {
    display: inline-flex;
    height: 18px;
    border: 1px solid #a1a6ad;
    background: #fff;
    color: #000;
}
.combo select {
    appearance: none;
    flex: 1;
    min-width: 0;
    padding: 0 2px;
    border: 0;
    background: none;
    font-size: 12px;
    line-height: 16px;
}
.combo::after {
    content: "";
    width: 16px;
    border-left: 1px solid #a1a6ad;
    background: conic-gradient(from -45deg at 50% 100%, #666 90deg, transparent 0) center/8px 4px no-repeat, #f1f3f5;
}
.year {
    width: 60px;
}
.month {
    width: 40px;
}
.filter input {
    width: 90px;
    height: 20px;
    padding: 0 2px;
    border: 1px solid #a1a6ad;
    font-size: 12px;
}

/* data grids */
.grid {
    flex: 1;
    min-height: 0;
    display: flex;
    flex-direction: column;
    margin: 0 7px 5px 6px;
    border: 1px solid #a1a6b0;
    background: #fff;
    color: #000;
}
table {
    width: 100%;
    table-layout: fixed;
    border-collapse: separate;
    border-spacing: 0;
}
th, td {
    height: 20px;
    padding: 0 4px;
    border: 1px solid #d6d9de;
    border-width: 0 1px 1px 0;
    line-height: 17px;
    overflow: hidden;
    white-space: nowrap;
}
th {
    border-color: #a1a6b0;
    background: linear-gradient(#fbfcfd, #ebeef2);
    color: #333;
    font-weight: normal;
}
td {
    padding-bottom: 1px;
}
tr > :last-child {
    border-right: 0;
}
.grid .right {
    padding-right: 7px;
}
.search td {
    color: #c8c8c8;
}
.search .right {
    padding-right: 4px;
}
.search svg {
    width: 17px;
    height: 17px;
}
.mid svg {
    margin: 0 auto;
}
.grid .gap td {
    height: 4px;
    padding: 0;
    border-color: #a1a6b0;
    line-height: 0;
}
.selected td {
    background: #ebecee;
}
.selected td:first-child {
    background: #fff;
    outline: 1px solid #a9d1f5;
    outline-offset: -1px;
}
.mid {
    text-align: center;
}
.ring {
    display: block;
    width: 10px;
    height: 10px;
    margin: 0 auto;
    border: 1px solid #000;
    border-radius: 50%;
}
input[type=checkbox] {
    appearance: none;
    display: block;
    width: 13px;
    height: 13px;
    margin: 0 4px;
    border: 1px solid #a3a7ae;
    background: #eee;
    box-shadow: inset 0 0 0 1px #fff;
}
input.some {
    background: #9159e8;
    box-shadow: inset 0 0 0 1px #fff;
}
input[type=checkbox]:checked::before {
    content: "";
    display: block;
    width: 6px;
    height: 9px;
    margin-left: 3px;
    border: solid #333;
    border-width: 0 2px 2px 0;
    transform: rotate(40deg);
}
.c-check {
    width: 30px;
}
.c-no {
    width: 110px;
}
.c-name {
    width: 128px;
}
.c-pay {
    width: 166px;
}
.c-done {
    width: 41px;
}
.c-sms {
    width: 47px;
}
.totals {
    margin-top: auto;
}
.totals td {
    height: 23px;
    border: 1px solid #a1a6b0;
    border-width: 1px 1px 0 0;
    background: linear-gradient(#f7f8fa, #eef1f5);
    color: #333;
}
.totals span {
    margin: 0 7px 0 5px;
}

/* status bar */
.status {
    flex: none;
    display: flex;
    height: 27px;
    border-top: 1px solid #a1a6b0;
    background: linear-gradient(#e7e9ed, #bcbfc5);
    font-family: "Noto Sans CJK KR", sans-serif;
    font-size: 12px;
    line-height: 26px;
}
.status span {
    padding: 0 9px;
    border-right: 2px groove #eee;
}

/* transfer dialog */
.dialog {
    position: absolute;
    inset: 69px 233px 70px 232px;
    z-index: 1;
    margin: 0;
    border-color: #65758d;
    box-shadow: inset 0 0 0 1px #93b2e0;
    background: #6b94d0;
}
.dialog .window-title {
    color: #fff;
}
.dialog .client {
    padding: 2px 3px;
}
.transfer {
    flex: none;
    display: grid;
    grid-template-columns: 92px 196px 1fr;
    grid-template-rows: 20px 23px 27px 27px;
    align-items: center;
    height: 130px;
    padding: 14px 12px;
    border: 1px solid #5e6166;
}
.transfer > input {
    height: 21px;
    padding: 0 3px;
    border: 1px solid #63666b;
    background: #fff;
    color: #000;
}
.transfer small {
    margin-left: 6px;
    font: 12px/16px "Noto Sans CJK KR", sans-serif;
}
.transfer small.left {
    grid-column: 2 / 4;
    align-self: start;
    margin-left: 0;
}
.combo.off {
    background: #dcdcdc;
    color: #777;
}
.off select {
    opacity: 1;
    color: #777;
}
.balance {
    display: flex;
    align-items: center;
    gap: 4px;
    justify-self: start;
    height: 20px;
    margin-left: 6px;
    padding: 0 6px 0 4px;
    border: 1px solid #c9ccd1;
    border-radius: 3px;
    color: #999;
}
.balance svg, .actions svg {
    width: 16px;
    height: 16px;
}
.dialog .grid {
    margin: 5px 0 0;
}
.dialog tbody td {
    background: #e1ebf5;
}
.dialog tbody th {
    color: #000;
    font-weight: bold;
    text-align: right;
    padding-right: 7px;
}
.dialog td.edit {
    padding: 0;
}
.edit input {
    display: block;
    width: 100%;
    height: 19px;
    border: 1px solid #3f97ec;
    background: #fff;
}
.masked {
    width: 72px;
    height: 12px;
}
.d-no {
    width: 26px;
}
.d-bank {
    width: 105px;
}
.d-acct {
    width: 100px;
}
.d-owner {
    width: 89px;
}
.d-amt {
    width: 108px;
}
.d-mine {
    width: 145px;
}
.actions {
    flex: none;
    display: flex;
    justify-content: flex-end;
    padding: 8px 1px 0 0;
}
.actions button {
    display: flex;
    align-items: center;
    gap: 4px;
    height: 28px;
    padding: 0 10px 2px 6px;
}
```
